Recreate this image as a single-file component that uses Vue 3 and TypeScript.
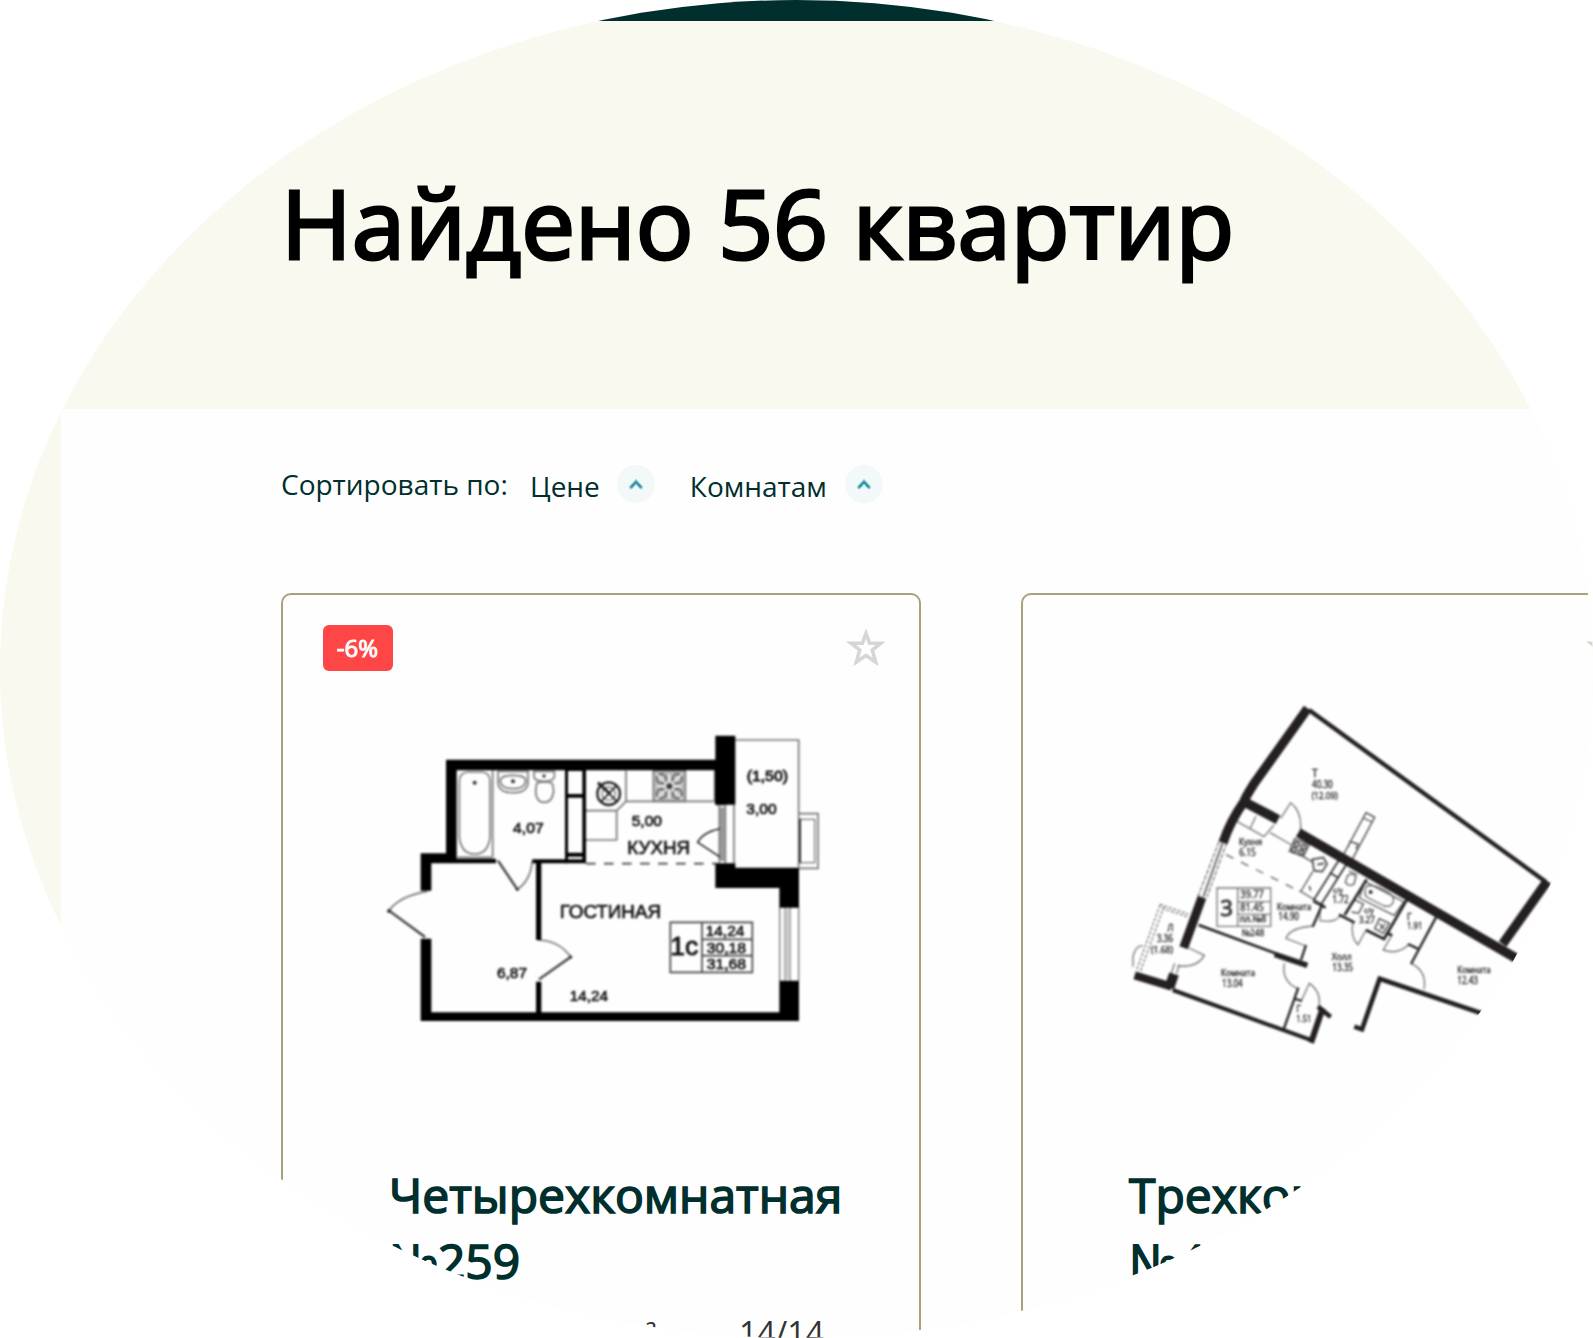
<script setup lang="ts">
interface PlanLabel {
  t: string
  x: number
  y: number
  w: number
  s: number
  b?: boolean
}

const sorts: string[] = ['Цене', 'Комнатам']

const studioLabels: PlanLabel[] = [
  { t: '4,07', x: 429, y: 338, w: 92, s: 46 },
  { t: '6,87', x: 381, y: 773, w: 90, s: 46 },
  { t: '14,24', x: 599, y: 844, w: 115, s: 46 },
  { t: '5,00', x: 785, y: 317, w: 91, s: 46 },
  { t: 'КУХНЯ', x: 772, y: 402, w: 188, s: 56 },
  { t: 'ГОСТИНАЯ', x: 569, y: 594, w: 304, s: 57 },
  { t: '(1,50)', x: 1130, y: 184, w: 124, s: 46, b: true },
  { t: '3,00', x: 1129, y: 283, w: 91, s: 46 },
  { t: '1с', x: 901, y: 706, w: 84, s: 78, b: true },
  { t: '14,24', x: 1007, y: 648, w: 116, s: 45 },
  { t: '30,18', x: 1010, y: 699, w: 118, s: 45 },
  { t: '31,68', x: 1010, y: 748, w: 118, s: 45 },
]

const threeRoomLabels: PlanLabel[] = [
  { t: 'Т', x: 576, y: 260, w: 17, s: 30 },
  { t: '40.30', x: 576, y: 295, w: 62, s: 30 },
  { t: '(12.09)', x: 575, y: 328, w: 78, s: 29 },
  { t: 'Кухня', x: 357, y: 466, w: 69, s: 27 },
  { t: '6.15', x: 358, y: 497, w: 49, s: 30 },
  { t: '3', x: 301, y: 679, w: 38, s: 68, b: true },
  { t: '39.77', x: 361, y: 623, w: 70, s: 31 },
  { t: '81.45', x: 361, y: 662, w: 70, s: 31 },
  { t: 'пл.№8', x: 359, y: 695, w: 80, s: 26 },
  { t: '№248', x: 365, y: 737, w: 68, s: 29 },
  { t: 'Комната', x: 471, y: 659, w: 103, s: 28 },
  { t: '14.90', x: 475, y: 690, w: 62, s: 30 },
  { t: 'Л', x: 142, y: 722, w: 19, s: 29 },
  { t: '3.36', x: 110, y: 756, w: 49, s: 30 },
  { t: '(1.68)', x: 93, y: 788, w: 66, s: 29 },
  { t: 'Комната', x: 303, y: 857, w: 102, s: 28 },
  { t: '13.04', x: 306, y: 890, w: 62, s: 30 },
  { t: 'Г', x: 529, y: 967, w: 14, s: 29 },
  { t: '1.51', x: 529, y: 997, w: 45, s: 29 },
  { t: 'с/у', x: 640, y: 609, w: 28, s: 24 },
  { t: '1.72', x: 637, y: 640, w: 49, s: 30 },
  { t: 'с/у', x: 733, y: 669, w: 28, s: 24 },
  { t: '3.27', x: 717, y: 699, w: 47, s: 29 },
  { t: 'Г', x: 861, y: 689, w: 14, s: 29 },
  { t: '1.91', x: 861, y: 718, w: 46, s: 29 },
  { t: 'Холл', x: 635, y: 810, w: 60, s: 28 },
  { t: '13.35', x: 637, y: 843, w: 62, s: 30 },
  { t: 'Комната', x: 1012, y: 848, w: 100, s: 28 },
  { t: '12.43', x: 1012, y: 882, w: 62, s: 30 },
]
</script>

<template>
  <div class="lens">
    <div class="topbar"></div>
    <header class="hero">
      <h1>Найдено 56 квартир</h1>
    </header>
    <main class="panel">
      <div class="sorting">
        <span class="sort-title">Сортировать по:</span>
        <button v-for="s in sorts" :key="s" class="sort" type="button">
          <span class="sort-name">{{ s }}</span>
          <span class="knob">
            <svg width="38" height="38" viewBox="0 0 38 38">
              <path d="M14 22.2 19 16.8 24 22.2" fill="none" stroke="#9bd0d8" stroke-width="4.2" stroke-linecap="round" />
              <path d="M14.5 21.8 19 17 23.5 21.8" fill="none" stroke="#3793a6" stroke-width="2.2" stroke-linecap="round" />
            </svg>
          </span>
        </button>
      </div>

      <div class="cards">
        <article class="card">
          <div class="card-top">
            <span class="badge">-6%</span>
            <svg class="star" width="39" height="38" viewBox="0 0 39 38">
              <path d="M20 5.5 23.6 15.2 35 15.2 26.3 22 29.6 34 20 27.4 10.4 34 13.7 22 5 15.2 16.4 15.2Z" />
            </svg>
          </div>
          <div class="plan-box studio">
            <svg class="plan" width="460" height="320" viewBox="0 0 1380 960">
              <g fill="none" stroke="#777" stroke-width="5">
                <path d="M368 150V412M262 412H368" />
                <path d="M268 185Q268 156 296 156H334Q360 156 360 185V352Q354 402 314 402T268 352Z" />
                <path d="M384 154H474V190Q470 218 429 218T384 190Z" />
                <path d="M391 182Q391 166 429 166T467 182Q466 206 429 206T391 182Z" />
                <path d="M492 154H553V172Q549 184 523 184T492 172Z" />
                <path d="M500 190Q523 182 547 190L551 212Q548 247 523 247T497 212Z" />
                <path d="M648 272H740L768 244H1034M768 152V244M740 272V360H648M1034 150V244" />
                <path d="M850 152H946V244H850Z" fill="#bbb" />
                <path d="M1096 60H1286V442M1286 281H1344V445H1286" />
                <path d="M1292 298H1334V428H1292" stroke-width="4" />
                <path d="M1039 254H1066V430M1048 254V430M1092 254V430" />
                <path d="M1229 562V782M1245 562V782M1260 562V782M1286 562V782" stroke-width="4" />
                <path d="M57 572Q88 528 172 514M57 572 165 651" />
                <path d="M487 422Q482 482 442 508L384 422" />
                <path d="M505 660Q568 662 602 711L507 778" />
                <path d="M1064 324Q1002 332 983 367L1061 418" stroke="#222" />
              </g>
              <g stroke="#444" stroke-width="5" fill="none">
                <path d="M57 572 165 651M384 422 442 508M602 711 507 778" stroke-width="7" />
                <path d="M648 431H1040" stroke-dasharray="29 25" stroke-width="5" />
                <path d="M901 607H1147V757H901ZM996 607V757M996 658H1147M996 707H1147" />
              </g>
              <g stroke="#222" stroke-width="4" fill="none">
                <circle cx="716" cy="221" r="34" stroke-width="7" />
                <circle cx="716" cy="221" r="20" stroke="#777" />
                <path d="M694 196 740 244M740 196 694 244" stroke-width="5" />
                <path d="M684 188 720 222" stroke-width="9" />
                <g stroke="#444">
                  <circle cx="874" cy="176" r="14" /><circle cx="922" cy="176" r="14" />
                  <circle cx="874" cy="221" r="14" /><circle cx="922" cy="221" r="14" />
                  <path d="M860 162 936 236M936 162 860 236M862 199H934M898 162V236" stroke="#fff" />
                  <circle cx="898" cy="199" r="7" fill="#333" />
                </g>
              </g>
              <g fill="#333">
                <circle cx="314" cy="188" r="6" /><circle cx="429" cy="184" r="6" /><circle cx="522" cy="168" r="5" />
                <circle cx="57" cy="573" r="6" /><circle cx="442" cy="508" r="5" /><circle cx="602" cy="711" r="5" />
                <circle cx="1058" cy="323" r="6" /><circle cx="1059" cy="417" r="6" />
              </g>
              <rect x="1050" y="262" width="15" height="160" fill="#999" />
              <rect x="1246" y="566" width="13" height="212" fill="#ccc" />
              <path d="M1290 296V430" stroke="#333" stroke-width="6" />
              <g fill="#000">
                <path d="M228 119H1036V47H1096V254H1035V151H648V430H585V151H260V416H378V430H184V512H152V400H228Z" />
                <path d="M152 656H184V877H498V785H514V877H1228V782H1287V903H152Z" />
                <path d="M487 418H592V430H514V660H498V430H487Z" />
                <path d="M1036 430H1096V443H1287V563H1228V504H1036Z" />
              </g>
              <g fill="#fefefe">
                <path d="M594 153H637V222H594ZM594 233H637V398H594ZM594 410H637V418H594Z" />
              </g>
              <g class="arial">
                <text v-for="(l, i) in studioLabels" :key="i" :x="l.x" :y="l.y" :font-size="l.s" :textLength="l.w" lengthAdjust="spacingAndGlyphs" :stroke-width="l.b ? 2.6 : 2">{{ l.t }}</text>
              </g>
            </svg>
          </div>
          <h2>Четырехкомнатная №259</h2>
          <div class="facts">
            <span class="area">31.68 м²</span>
            <span>14/14</span>
          </div>
        </article>

        <article class="card">
          <div class="card-top">
            <span></span>
            <svg class="star" width="39" height="38" viewBox="0 0 39 38">
              <path d="M20 5.5 23.6 15.2 35 15.2 26.3 22 29.6 34 20 27.4 10.4 34 13.7 22 5 15.2 16.4 15.2Z" />
            </svg>
          </div>
          <div class="plan-box three">
            <svg class="plan" width="440" height="370" viewBox="0 0 1320 1110">
              <g fill="none" stroke="#777" stroke-width="4">
                <path d="M352 395 432 440 462 405M408 378 390 416M450 428 515 465M482 385 512 338Q548 365 541 425" />
                <path d="M524 446 568 464 550 500 508 484Z" fill="#ccc" stroke="#555" />
                <circle cx="530" cy="463" r="7" stroke="#444" /><circle cx="551" cy="471" r="7" stroke="#444" />
                <circle cx="522" cy="479" r="7" stroke="#444" /><circle cx="543" cy="487" r="7" stroke="#444" />
                <path d="M550 500 580 518M578 545 543 603" stroke="#555" />
                <path d="M577 508 610 502 621 522 607 545 582 542ZM592 524 612 520" stroke="#444" stroke-width="5" />
                <path d="M568 588 572 602" stroke="#333" />
                <path d="M297 455 234 620M320 458 261 620" stroke-dasharray="14 4" />
                <path d="M308 458 250 620" stroke="#333" />
                <path d="M120 645 50 840M132 650 62 842M120 643 205 672M126 655 205 681" stroke-dasharray="9 5" />
                <path d="M68 768Q48 764 39 800V830" />
                <path d="M207 774 253 796Q232 834 172 828M164 820 154 850M178 824 170 850" />
                <path d="M318 494 535 602" stroke-dasharray="25 25" stroke="#666" />
                <path d="M538 602 615 648" stroke="#666" />
                <path d="M582 708Q510 712 498 745L557 768" />
                <path d="M493 820Q484 874 533 896M544 932 568 880Q604 905 597 948" />
                <path d="M600 655V692Q645 700 662 676" />
                <path d="M699 694Q690 742 714 764L738 720" />
                <path d="M815 736 790 780Q834 796 868 762M874 820Q922 844 912 898" />
                <path d="M682 558Q694 546 708 560L702 582Q688 592 676 578ZM686 543 712 554" stroke="#555" />
                <path d="M734 574 852 636 822 676 718 624Z" stroke="#555" />
                <path d="M738 590Q758 578 806 608C832 624 820 656 792 648L745 624Q728 614 738 590Z" stroke="#666" />
                <path d="M700 628 730 642 716 670 695 666M778 686 808 700 790 730 764 716ZM778 700 792 718M795 702 780 718" stroke="#444" />
              </g>
              <g fill="none" stroke="#241f20">
                <path d="M670 495 738 368 764 382 698 506M685 470 690 455 714 462 708 477M730 384 756 396" stroke-width="4" stroke="#444" />
                <path d="M660 505 580 632M684 516 603 644M630 548 653 563" stroke-width="5" />
                <path d="M567 60 1278 576" stroke-width="13" />
                <path d="M740 568 674 675M657 674 704 698M738 720 792 747 860 630M800 730 817 736" stroke-width="8" />
                <path d="M948 682 873 822M864 762 893 776" stroke-width="7" />
                <path d="M605 648 578 710M580 634 617 653M558 765 543 810M535 893 491 1018M526 927 546 933" stroke-width="7" />
                <path d="M236 705 470 791" stroke-width="8" />
                <path d="M158 900 578 1052" stroke-width="12" />
                <path d="M464 793 562 826" stroke-width="17" />
                <path d="M608 955 573 1058" stroke-width="18" />
                <path d="M594 950 632 981" stroke-width="14" />
                <path d="M703 1010 726 1018 779 866 1150 992" stroke-width="14" />
                <path d="M44 856 155 890" stroke-width="24" />
                <path d="M162 852 148 893" stroke-width="30" />
                <path d="M246 622 191 773" stroke-width="27" />
                <path d="M309 458Q330 395 372 335 374 325 400 284L563 55" stroke-width="28" />
                <path d="M372 335 474 389M535 428 1210 817" stroke-width="29" />
                <path d="M1282 573 1148 762" stroke-width="28" />
                <path d="M291 594H452V709H291ZM353 594V709M353 635H452M353 673H452" stroke="#777" stroke-width="4" />
              </g>
              <circle cx="752" cy="606" r="6" fill="#333" />
              <g class="humanist">
                <text v-for="(l, i) in threeRoomLabels" :key="i" :x="l.x" :y="l.y" :font-size="l.s" :textLength="l.w" lengthAdjust="spacingAndGlyphs" :stroke-width="l.b ? 3 : 1.3">{{ l.t }}</text>
              </g>
            </svg>
          </div>
          <h2>Трехкомнатная №448</h2>
        </article>
      </div>
    </main>
  </div>
</template>

<style>
body {
  background: #fff;
  overflow: hidden;
}
</style>

<style scoped>
.lens {
  width: 1593px;
  height: 1338px;
  overflow: hidden;
  border-radius: 50%;
  background: #f9f9ef;
  font-family: "Open Sans", sans-serif;
  color: #002f2d;
}
.topbar {
  height: 21px;
  background: #002f2d;
}
.hero {
  height: 388px;
  box-sizing: border-box;
  padding: 135px 0 0 281px;
}
h1 {
  margin: 0;
  font-size: 96px;
  line-height: 131px;
  font-weight: 400;
  letter-spacing: -0.05px;
  color: #000;
  -webkit-text-stroke: 3px #000;
  white-space: nowrap;
  clip-path: inset(29px 0 0 0);
}
.panel {
  margin-left: 61px;
  width: 1700px;
  height: 929px;
  box-sizing: border-box;
  padding: 56px 0 0 220px;
  background: #fefefe;
}
.sorting {
  display: flex;
  height: 38px;
  font-size: 28px;
  line-height: 38px;
}
.sort-title {
  width: 249px;
}
.sort {
  display: flex;
  padding: 0;
  margin-right: 35px;
  border: 0;
  background: none;
  font: inherit;
  color: inherit;
}
.sort-name {
  padding-top: 2px;
  margin-right: 17px;
}
.sort:last-child .sort-name {
  margin-right: 18px;
}
.knob {
  width: 38px;
  height: 38px;
  border-radius: 50%;
  background: #f3f8f9;
}
.knob svg {
  display: block;
  filter: blur(0.5px);
}
.cards {
  display: flex;
  gap: 100px;
  margin-top: 90px;
}
.card {
  flex: none;
  width: 640px;
  height: 900px;
  box-sizing: border-box;
  border: 2px solid #a8a17a;
  border-radius: 10px;
}
.card-top {
  display: flex;
  justify-content: space-between;
  height: 46px;
  margin: 30px 34px 0 40px;
}
.badge {
  width: 70px;
  height: 46px;
  border-radius: 6px;
  background: #ff4646;
  color: #fff;
  font-size: 24px;
  line-height: 46px;
  text-align: center;
  text-indent: -1px;
  -webkit-text-stroke: 0.9px #fff;
}
.star {
  margin-top: 3px;
  filter: blur(0.7px);
}
.star path {
  fill: none;
  stroke: #d6d6d6;
  stroke-width: 3.6;
}
.plan-box {
  height: 491px;
  box-sizing: border-box;
}
.studio {
  padding: 49px 0 0 87px;
}
.three {
  padding: 19px 0 0 97px;
}
.plan {
  display: block;
  filter: blur(0.8px);
}
.arial {
  font-family: "Liberation Sans", Arial, sans-serif;
  fill: #111;
  stroke: #111;
}
.humanist {
  font-family: "Open Sans", sans-serif;
  fill: #333;
  stroke: #333;
}
h2 {
  width: 480px;
  margin: 0 0 0 106px;
  font-size: 48px;
  line-height: 66px;
  font-weight: 400;
  -webkit-text-stroke: 1.6px #002f2d;
}
.facts {
  display: flex;
  margin: 17px 0 0 107px;
  font-size: 32px;
  line-height: 44px;
  color: #333;
}
.area {
  width: 349px;
  padding: 4px 0 0 142px;
  box-sizing: border-box;
}
</style>
